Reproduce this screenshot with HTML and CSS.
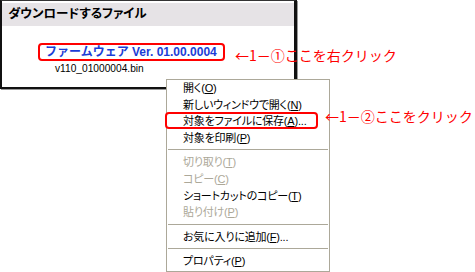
FILE: index.html
```html
<!DOCTYPE html>
<html lang="ja">
<head>
  <meta charset="UTF-8">
  <title>ダウンロードするファイル</title>
  <link rel="stylesheet" href="styles.css">
</head>
<body>
  <div class="page">
    <div class="panel">
      <div class="panel-title">ダウンロードするファイル</div>
      <div class="file">
        <a class="file-link" href="#">ファームウェア Ver. 01.00.0004</a>
        <div class="file-name">v110_01000004.bin</div>
      </div>
    </div>

    <div class="note note-1">←1－①ここを右クリック</div>

    <!-- Context menu -->
    <ul class="menu">
      <li>開く(<u>O</u>)</li>
      <li>新しいウィンドウで開く(<u>N</u>)</li>
      <li>対象をファイルに保存(<u>A</u>)...</li>
      <li>対象を印刷(<u>P</u>)</li>
      <li class="sep"></li>
      <li class="off">切り取り(<u>T</u>)</li>
      <li class="off">コピー(<u>C</u>)</li>
      <li>ショートカットのコピー(<u>T</u>)</li>
      <li class="off">貼り付け(<u>P</u>)</li>
      <li class="sep"></li>
      <li>お気に入りに追加(<u>F</u>)...</li>
      <li class="sep"></li>
      <li>プロパティ(<u>P</u>)</li>
    </ul>

    <div class="mark"></div>
    <div class="note note-2">←1－②ここをクリック</div>
  </div>
</body>
</html>
```

FILE: styles.css
```css
body {
  margin: 0;
  background: #fff;
  font-family: "Liberation Sans", "Noto Sans CJK JP", sans-serif;
  font-size: 12px;
  color: #000;
}

.page {
  position: relative;
  width: 475px;
  height: 272px;
  overflow: hidden;
}

.panel {
  box-sizing: border-box;
  width: 297px;
  height: 89px;
  border: 2px solid #111;
  border-top: 1px solid #333;
  border-right-width: 3px;
  box-shadow: 1px 1px 0 #999;
}

.panel-title {
  margin-top: 2px;
  height: 23px;
  line-height: 23px;
  padding-left: 6px;
  background: #e6e3e6;
  font-weight: bold;
  font-size: 12.5px;
  font-feature-settings: "palt";
}

.file {
  padding-top: 17px;
}

.file-link {
  display: inline-block;
  box-sizing: border-box;
  height: 18px;
  line-height: 14px;
  margin-left: 36px;
  padding: 0 6px 0 5px;
  border: 2px solid #f00;
  border-radius: 4px;
  color: #1a3cd6;
  font-weight: bold;
  text-decoration: none;
}

.file-name {
  margin: 2px 0 0 53px;
  line-height: 12px;
  font-size: 10.2px;
}

.note {
  position: absolute;
  color: #f00;
  font-family: "Noto Sans CJK JP", sans-serif;
  font-size: 14px;
  line-height: 16px;
  white-space: nowrap;
}

.note-1 {
  left: 235px;
  top: 47px;
}

.note-2 {
  left: 325px;
  top: 108px;
}

.menu {
  position: absolute;
  left: 166px;
  top: 79px;
  box-sizing: border-box;
  width: 164px;
  height: 193px;
  margin: 0;
  padding: 0;
  list-style: none;
  background: #fff;
  border: 1px solid #aca899;
}

.menu li {
  height: 16.6px;
  line-height: 16.6px;
  padding-left: 16px;
  white-space: nowrap;
  font-size: 11px;
  letter-spacing: -0.2px;
  font-feature-settings: "palt";
}

.menu li.off {
  color: #aca899;
}

.menu li.sep {
  height: 8px;
  padding: 0;
  margin: 0 1px;
  background: linear-gradient(#aca899, #aca899) 0 3px / 100% 1px no-repeat;
}

.mark {
  position: absolute;
  left: 165px;
  top: 112px;
  box-sizing: border-box;
  width: 153px;
  height: 17px;
  border: 2px solid #f00;
  border-radius: 4px;
}
```
